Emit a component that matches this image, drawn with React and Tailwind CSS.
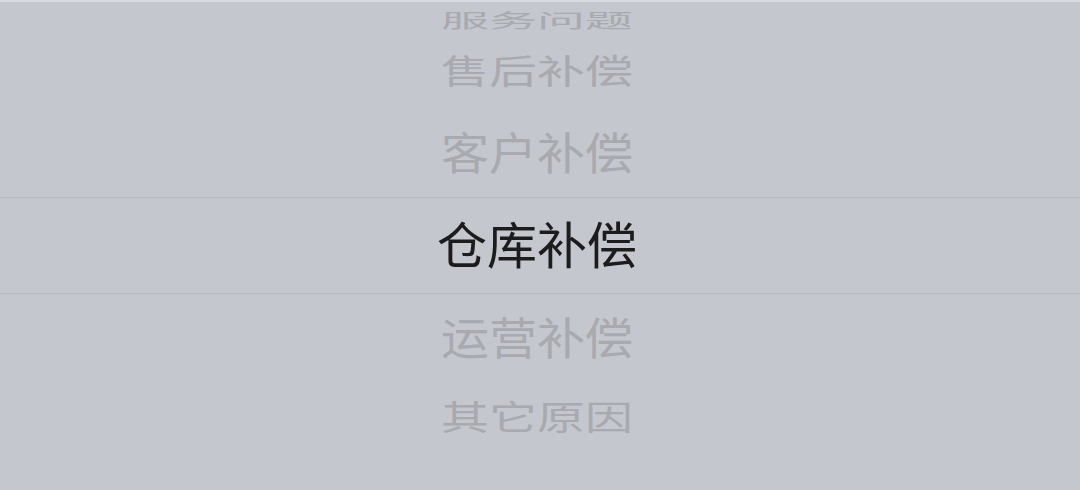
const rows = [
  { label: "服务问题", h: "h-[34px]", scale: "scale-y-[0.4]", pad: "pt-[2px]" },
  { label: "售后补偿", h: "h-[72px]", scale: "scale-y-[0.71]", pad: "pb-[6px]" },
  { label: "客户补偿", h: "h-[89px]", scale: "scale-y-[0.93]", pad: "pb-[6px]" },
];

const rowsBelow = [
  { label: "运营补偿", h: "h-[88px]", scale: "scale-y-[0.93]", pad: "pb-[6px]" },
  { label: "其它原因", h: "h-[72px]", scale: "scale-y-[0.71]", pad: "pb-[6px]" },
];

const Row = ({ label, h, scale, pad }) => (
  <div className={`${h} ${pad} flex items-center justify-center overflow-hidden pr-[6px]`}>
    <span className={`text-[48px] leading-none text-[#a9aaaf] ${scale}`}>{label}</span>
  </div>
);

export default function App() {
  return (
    <div
      className="w-[1080px] h-[490px] bg-[#c4c7ce] flex flex-col overflow-hidden"
      style={{ fontFamily: '"Noto Sans CJK SC", "Noto Sans", sans-serif' }}
    >
      <div className="h-[2px] bg-[#dcdde0]" />
      {rows.map((r) => (
        <Row key={r.label} {...r} />
      ))}
      <div className="h-px bg-[#b8bbc2]" />
      <div className="h-[95px] flex items-center justify-center pb-[8px] pr-[6px]">
        <span className="text-[50px] leading-none text-[#1c1c1e]">仓库补偿</span>
      </div>
      <div className="h-px bg-[#b8bbc2]" />
      {rowsBelow.map((r) => (
        <Row key={r.label} {...r} />
      ))}
    </div>
  );
}
